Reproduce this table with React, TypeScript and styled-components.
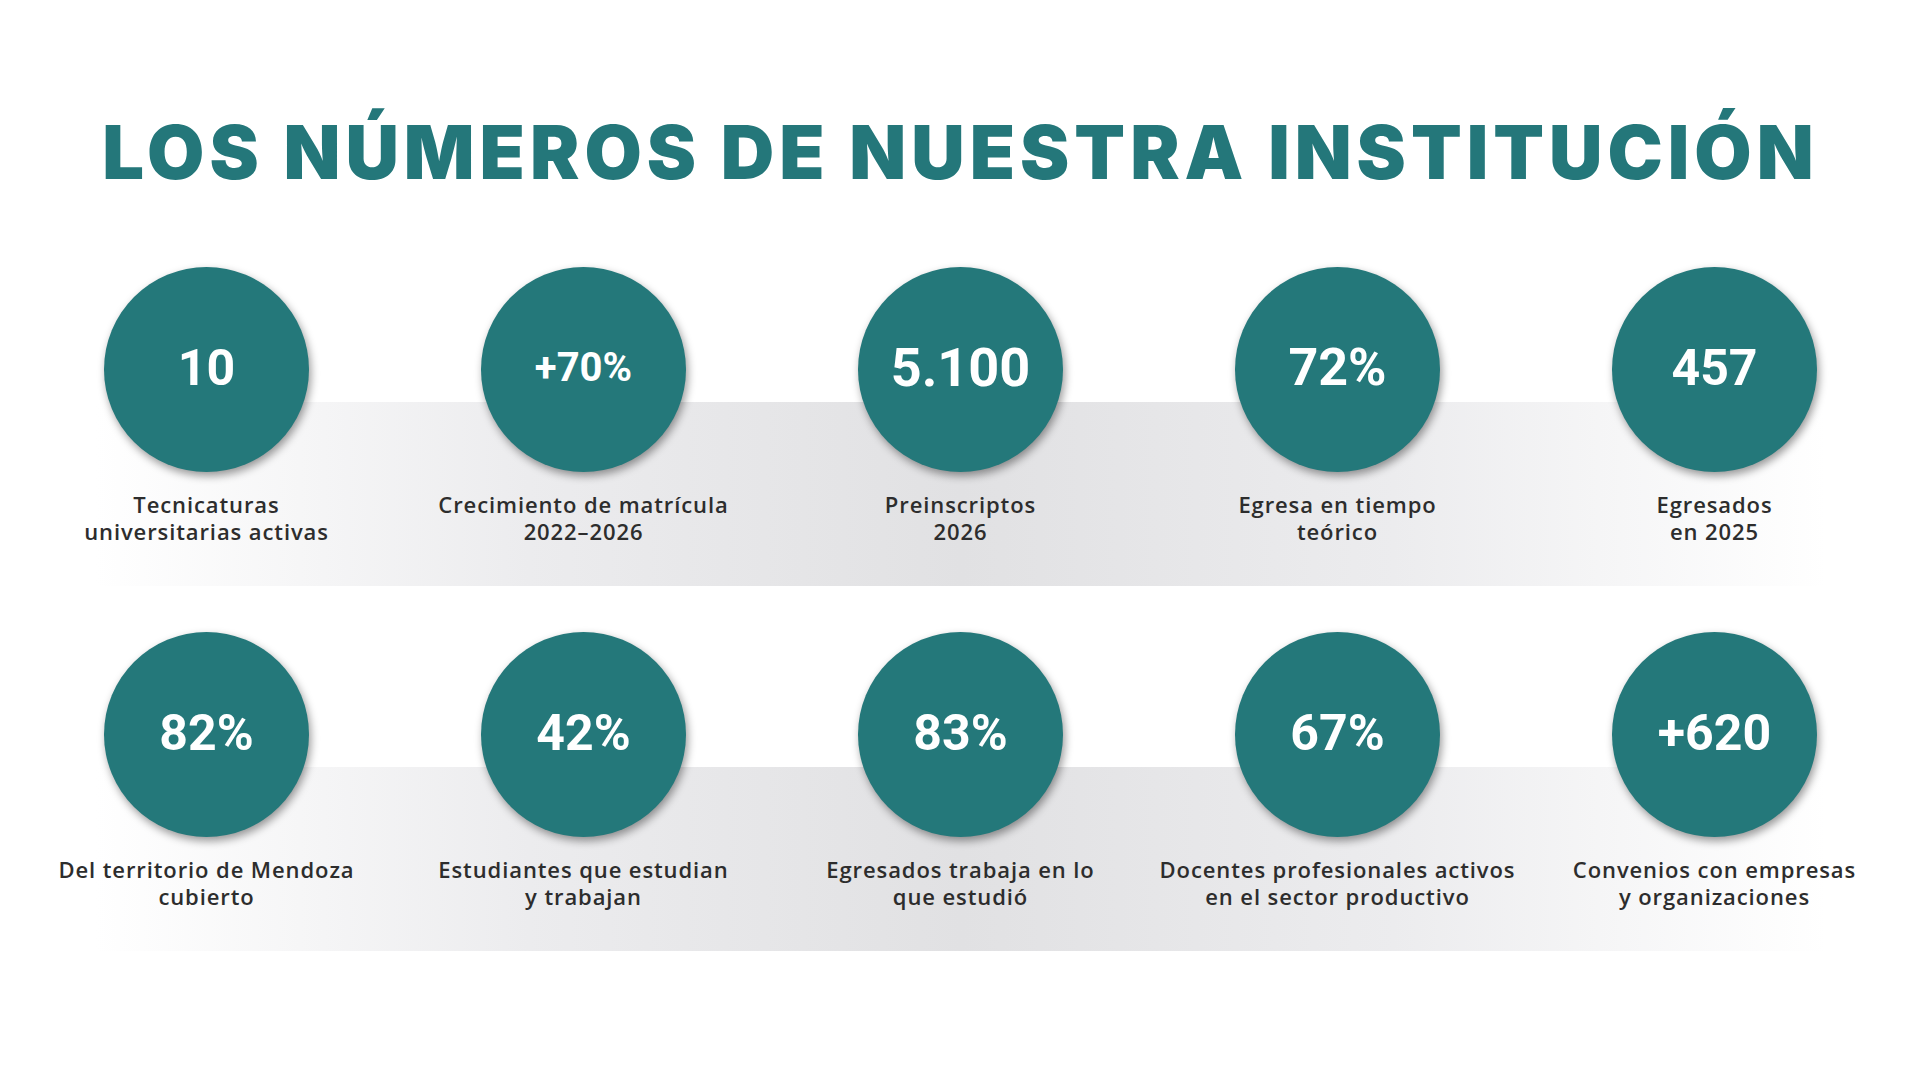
import React from 'react';
import styled, { createGlobalStyle } from 'styled-components';

const stats = [
  [
    { value: '10', label: ['Tecnicaturas', 'universitarias activas'] },
    { value: '+70%', label: ['Crecimiento de matrícula', '2022–2026'], size: 40 },
    { value: '5.100', label: ['Preinscriptos', '2026'], size: 54 },
    { value: '72%', label: ['Egresa en tiempo', 'teórico'], size: 52 },
    { value: '457', label: ['Egresados', 'en 2025'] },
  ],
  [
    { value: '82%', label: ['Del territorio de Mendoza', 'cubierto'] },
    { value: '42%', label: ['Estudiantes que estudian', 'y trabajan'] },
    { value: '83%', label: ['Egresados trabaja en lo', 'que estudió'] },
    { value: '67%', label: ['Docentes profesionales activos', 'en el sector productivo'] },
    { value: '+620', label: ['Convenios con empresas', 'y organizaciones'] },
  ],
];

export default function App() {
  return (
    <Page>
      <GlobalStyle />
      <Title>LOS NÚMEROS DE NUESTRA INSTITUCIÓN</Title>
      {stats.map((row, i) => (
        <Row key={i}>
          {row.map((s) => (
            <Stat key={s.value}>
              <Circle>
                <Value $size={s.size ?? 50}>{s.value}</Value>
              </Circle>
              <Label>
                {s.label[0]}
                <br />
                {s.label[1]}
              </Label>
            </Stat>
          ))}
        </Row>
      ))}
    </Page>
  );
}

const GlobalStyle = createGlobalStyle`
  html, body {
    margin: 0;
    padding: 0;
    background: #ffffff;
  }
`;

const Page = styled.div`
  width: 1921px;
  height: 1080px;
  box-sizing: border-box;
  padding: 0 18px;
  display: flex;
  flex-direction: column;
  align-items: center;
  overflow: hidden;
`;

const Title = styled.h1`
  margin: 112px 0 0;
  font-family: Inter, "Liberation Sans", sans-serif;
  font-weight: 900;
  font-size: 74px;
  line-height: 80px;
  letter-spacing: 5px;
  color: #24777a;
  white-space: nowrap;
`;

const Row = styled.div`
  width: 100%;
  display: grid;
  grid-template-columns: repeat(5, 1fr);
  margin-top: 75px;
  height: 319px;
  background-image: linear-gradient(90deg, #ffffff 0%, #ececee 25%, #e1e1e3 50%, #ececee 75%, #ffffff 100%);
  background-repeat: no-repeat;
  background-size: 1730px 184px;
  background-position: center 135px;

  & + & {
    margin-top: 46px;
  }
`;

const Stat = styled.div`
  display: flex;
  flex-direction: column;
  align-items: center;
`;

const Circle = styled.div`
  width: 205px;
  height: 205px;
  border-radius: 50%;
  background: #24787a;
  box-shadow: 2px 4px 8px rgba(0, 0, 0, 0.4);
  display: flex;
  align-items: center;
  justify-content: center;
`;

const Value = styled.span<{ $size: number }>`
  font-family: Roboto, "Liberation Sans", sans-serif;
  font-weight: 700;
  font-size: ${(p) => p.$size}px;
  color: #ffffff;
  line-height: 1;
  margin-top: -4px;
`;

const Label = styled.div`
  margin-top: 19px;
  font-family: "Open Sans", "Liberation Sans", sans-serif;
  font-weight: 600;
  font-size: 22px;
  line-height: 27px;
  letter-spacing: 0.9px;
  color: #2d2d2d;
  text-align: center;
  white-space: nowrap;
`;
